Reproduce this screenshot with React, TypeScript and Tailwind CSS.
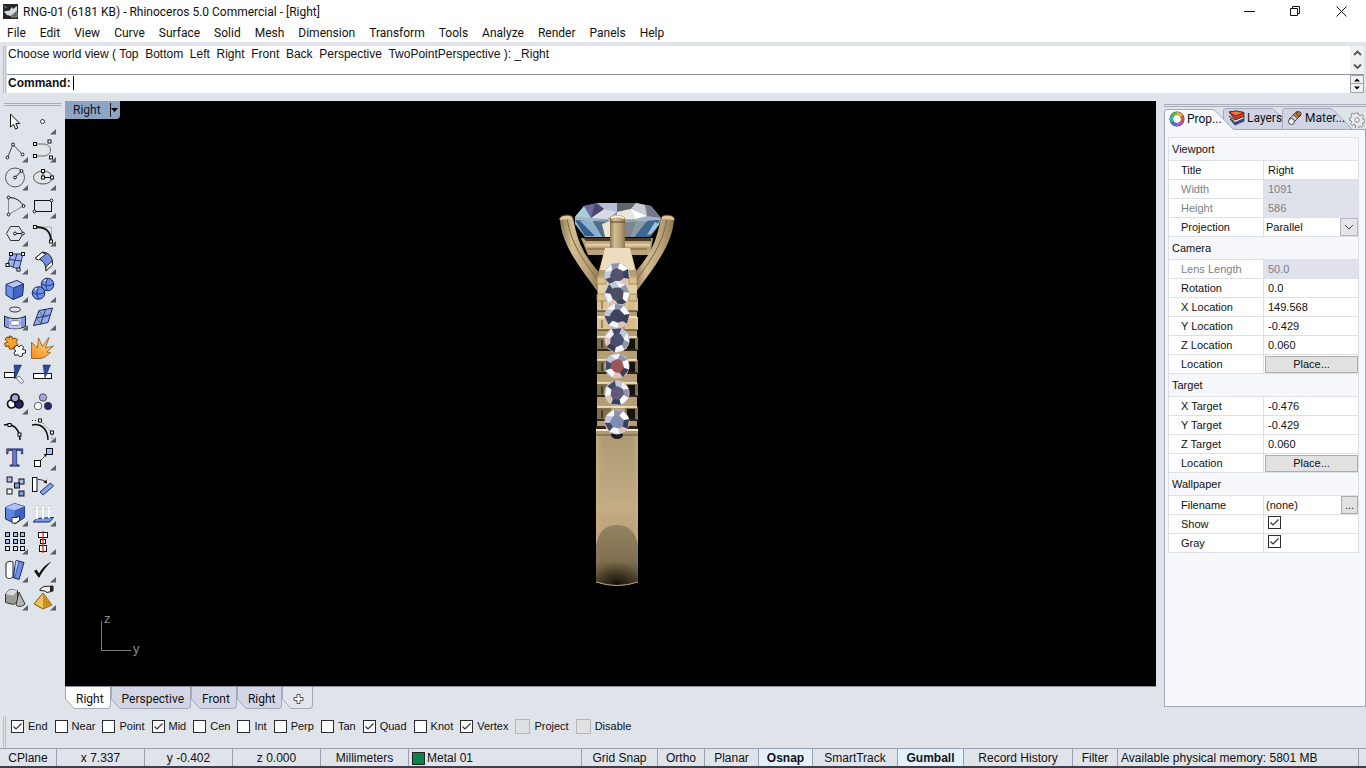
import { useState, type ReactNode } from 'react';
import clsx from 'clsx';

const menus = ['File', 'Edit', 'View', 'Curve', 'Surface', 'Solid', 'Mesh', 'Dimension', 'Transform', 'Tools', 'Analyze', 'Render', 'Panels', 'Help'];

function Check({ id, defaultChecked, disabled }: { id: string; defaultChecked?: boolean; disabled?: boolean }) {
    return (
        <span className="grid shrink-0 place-items-center">
            <input
                id={id}
                type="checkbox"
                defaultChecked={defaultChecked}
                disabled={disabled}
                className={clsx('peer [grid-area:1/1] appearance-none border', disabled ? 'size-[15px] border-[#b4b6ba] bg-[#dfe0e2]' : 'size-[13px] border-[#2c2c30] bg-white')}
            />
            <svg className="pointer-events-none [grid-area:1/1] opacity-0 peer-checked:opacity-100" width="13" height="13" fill="none" stroke="#333" strokeWidth="1.2">
                <path d="M2.5 6.5 5 9l5.5-5.5" />
            </svg>
        </span>
    );
}

/* ---------- tool palette ---------- */

const Sq = ({ x, y, s = 3, fill = '#fff' }: { x: number; y: number; s?: number; fill?: string }) => (
    <rect x={x - s / 2} y={y - s / 2} width={s} height={s} fill={fill} stroke="#111" />
);
const Dot = ({ x, y, r = 1.4 }: { x: number; y: number; r?: number }) => <circle cx={x} cy={y} r={r} fill="#fff" stroke="#111" />;

type Tool = { name: string; more?: boolean; icon: ReactNode };

const tools: Tool[] = [
    { name: 'Select', icon: <path d="M9.5 7v13l3-2.6 2 4.6 2.3-1-2-4.5h4z" fill="#fff" stroke="#111" /> },
    { name: 'Point', more: true, icon: <circle cx="13.5" cy="14.5" r="2" fill="#fff" stroke="#333" /> },
    {
        name: 'Polyline', more: true,
        icon: <><path d="M6.5 22.5 12 9.5l9.5 10" fill="none" stroke="#444" /><Dot x={6.5} y={22.5} /><Dot x={12} y={9.5} /><Dot x={21.5} y={19.5} /></>,
    },
    {
        name: 'Control point curve', more: true,
        icon: <><path d="M6 9h8c10 0 10 12 0 12H6" fill="none" stroke="#666" /><Sq x={6} y={9} /><Sq x={20.5} y={6.5} /><Sq x={6} y={21} /><Sq x={22} y={22.5} /></>,
    },
    {
        name: 'Circle', more: true,
        icon: <><circle cx="14" cy="14.5" r="9.5" fill="none" stroke="#555" /><path d="m14 14.5 6.5-6.5" stroke="#111" /><Dot x={14} y={14.5} /><Dot x={20.5} y={8} /></>,
    },
    {
        name: 'Ellipse', more: true,
        icon: <><ellipse cx="14" cy="14.5" rx="9.5" ry="6.5" fill="none" stroke="#555" /><path d="M14 8v6.5h9" stroke="#111" fill="none" /><Sq x={14} y={8} /><Sq x={14} y={14.5} /><Sq x={23} y={14.5} /></>,
    },
    {
        name: 'Arc', more: true,
        icon: <><path d="M7.5 23.5V6.5M7.5 23.5 22.5 15" stroke="#888" /><path d="M7.5 6.5c7 0 12 3 15 8.5" fill="none" stroke="#111" /><Dot x={7.5} y={6.5} /><Dot x={22.5} y={15} /><Dot x={7.5} y={23.5} /></>,
    },
    { name: 'Rectangle', more: true, icon: <><rect x="5.5" y="9.5" width="17" height="11" fill="none" stroke="#111" /><Dot x={5.5} y={20.5} /><Dot x={22.5} y={9.5} /></> },
    {
        name: 'Polygon', more: true,
        icon: <><path d="m5.5 14.5 4-7h8.5l4 7-4 7H9.500z" fill="none" stroke="#333" /><path d="M14 14.500h8" stroke="#111" /><Dot x={14} y={14.5} /><Dot x={22} y={14.5} /></>,
    },
    {
        name: 'Fillet', more: true,
        icon: <><path d="M6 8h16.500v15" fill="none" stroke="#aaa" /><path d="M6 8c11 0 16 4 16 15" fill="none" stroke="#111" strokeWidth="1.800" /><Sq x={6} y={8} /><Sq x={22} y={22.5} /></>,
    },
    {
        name: 'Surface from points', more: true,
        icon: (
            <>
                <path d="M10 7h12l-4 15.500L6.500 18z" fill="#9db4ea" stroke="#25356b" />
                <path d="m16 7-4 13M8.500 12.500l12 1.500" stroke="#25356b" />
                <Sq x={10} y={7} /><Sq x={22} y={7} /><Sq x={6.5} y={18} /><Sq x={17.5} y={22.5} />
            </>
        ),
    },
    {
        name: 'Sweep', more: true,
        icon: <><path d="M6 11.500 13.500 5c7 1 10.500 5 10 12.500L17 24c0-7-3-12-11-12.500z" fill="#6f8fe0" stroke="#222" /><path d="m6 11.500 7-6 4 1.500-7.500 6zM23.500 14v4L17 24v-4.500z" fill="#fff" stroke="#222" /></>,
    },
    {
        name: 'Box', more: true,
        icon: (
            <>
                <path d="m5 9.500 11-4 6.500 3.500-1 11.500L12 24.500 5 20z" fill="#6d90e6" stroke="#142864" />
                <path d="m5 9.500 11-4 6.500 3.500L12.500 13z" fill="#b3c7f7" stroke="#142864" strokeWidth=".7" />
                <path d="m12.500 13 10-4-1 11.500-9.500 4z" fill="#4468c2" stroke="#142864" strokeWidth=".7" />
            </>
        ),
    },
    {
        name: 'Boolean', more: true,
        icon: (
            <>
                <circle cx="18.500" cy="9.500" r="6.300" fill="#6d90e6" stroke="#142864" />
                <circle cx="9.500" cy="18" r="6.300" fill="#6d90e6" stroke="#142864" />
                <path d="M18.500 3.500c-2 4-2 8 0 12M12.500 9c4 2 8 2 12 0M9.500 12c-2 4-2 8 0 12M3.500 17.500c4 2 8 2 12 0" fill="none" stroke="#142864" strokeWidth=".8" />
                <path d="m15 6 2-1.500M6 14.500 8 13" stroke="#e4ecff" strokeWidth="1.500" />
            </>
        ),
    },
    {
        name: 'Project to surface', more: true,
        icon: (
            <>
                <ellipse cx="14" cy="6.500" rx="5.500" ry="2.500" fill="none" stroke="#333" />
                <path d="M3.500 13c6 3.500 15 3.500 21 0v10.500c-6 3-15 3-21 0z" fill="#7d9be8" stroke="#222" />
                <path d="M8 15.500c4 1 8 1 12 0V25c-4 .8-8 .8-12 0z" fill="#b9caf6" />
                <ellipse cx="14" cy="20" rx="5" ry="2.500" fill="#fff" stroke="#555" strokeWidth=".7" />
            </>
        ),
    },
    {
        name: 'Rebuild mesh', more: true,
        icon: <><path d="M10 7.500 23.500 5 19 19.500 4.500 22.500z" fill="#8fa9e8" stroke="#222c55" /><path d="m16.500 6.500-5 15M7.500 15l13.500-3" stroke="#222c55" strokeWidth=".9" /><path d="M10 7.500 14 14l7-2M7.500 15l5 6" fill="none" stroke="#3c4a80" strokeWidth=".7" /></>,
    },
    {
        name: 'Join',
        icon: (
            <>
                <path d="m8 5 3 .5.500 2.500 3-1 2 2-1.500 2.500 2 2-2 3-2-1-2 3-3-1 0-2.500-3.500.5-1-3 3-1.500-2.500-3 2-2 2.500 1z" fill="#f5a32a" stroke="#7a4306" />
                <path d="m16 14 2 2 2.500-2 2 2-1 2.500 3 .5v3l-3 .5 0 2.500-3 .5-1.500-2-3 1-1-3 2-1.500-2.500-2 1.500-2.500z" fill="#fff" stroke="#222" />
            </>
        ),
    },
    { name: 'Explode', icon: <path d="m2.500 11 6 6L9.500 7l4 8.500L20 6.500l-3.500 10.500 8-2-7 6 4 .5-5.500 4.500-4 1.500h-9.500z" fill="url(#blast)" stroke="#7d4509" strokeWidth=".7" /> },
    {
        name: 'Trim',
        icon: <><rect x="3.500" y="13.500" width="10" height="5" fill="#fff" stroke="#111" /><path d="m15 19 3-2 5 5.500-3 2z" fill="#eee" stroke="#777" /><path d="M13 6h7.500L14 20z" fill="#2d4a96" stroke="#182a5e" strokeWidth=".5" /></>,
    },
    { name: 'Split', icon: <><rect x="4.500" y="14.500" width="18" height="5" fill="#fff" stroke="#111" /><path d="M14 6h7.500L16 19z" fill="#2d4a96" stroke="#182a5e" strokeWidth=".5" /></> },
    {
        name: 'Group', more: true,
        icon: (
            <g stroke="#111" strokeWidth="1.700">
                <circle cx="10.500" cy="17" r="4" fill="#fff" /><circle cx="18" cy="17" r="4" fill="#26236c" /><circle cx="14" cy="11" r="4" fill="#a5a5dc" />
            </g>
        ),
    },
    {
        name: 'Ungroup',
        icon: (
            <g stroke="#333" strokeWidth=".8">
                <circle cx="14" cy="10.500" r="3.700" fill="#a5a5dc" /><circle cx="9" cy="19" r="3.700" fill="#fff" /><circle cx="19" cy="19" r="3.700" fill="#26236c" />
            </g>
        ),
    },
    { name: 'Edit points', icon: <><path d="M3 10c9-2 16 4 16 15" fill="none" stroke="#111" strokeWidth="1.500" /><Sq x={8.5} y={10} /><Sq x={18.5} y={19.5} /></> },
    {
        name: 'Control points', more: true,
        icon: <><path d="M3 10c9-2 16 4 16 15" fill="none" stroke="#111" strokeWidth="1.500" /><path d="M3 5.500h8l12 12V25" fill="none" stroke="#222" strokeDasharray="1 2" /><Sq x={11} y={5.500} /><Sq x={23} y={17.500} /></>,
    },
    {
        name: 'Text',
        icon: <text x="13.500" y="23" textAnchor="middle" fontFamily="Liberation Serif, serif" fontWeight="bold" fontSize="25" fill="#5f82dc" stroke="#1b2c66" strokeWidth=".8">T</text>,
    },
    {
        name: 'Move', more: true,
        icon: <><path d="m12 17 5-5" stroke="#222" strokeDasharray="2 1" /><path d="m18 10.500-3.500 1 2.500 2.500z" fill="#111" /><Sq x={20.5} y={8.5} s={6} fill="#a9bdf0" /><Sq x={8.5} y={20.5} s={6} /></>,
    },
    {
        name: 'Copy',
        icon: <><Sq x={8.5} y={8.5} s={5} fill="#a9bdf0" /><Sq x={20.5} y={10.5} s={5} fill="#a9bdf0" /><Sq x={16} y={14.5} s={5} fill="#7c99e2" /><Sq x={8.5} y={20.5} s={5} /><Sq x={20.5} y={22.5} s={5} fill="#7c99e2" /></>,
    },
    {
        name: 'Rotate',
        icon: <><rect x="3.500" y="6.500" width="4.500" height="14" fill="#fff" stroke="#111" /><path d="m11 21 10.500-9 3 3-10.500 9z" fill="#8ba6ea" stroke="#1b2c66" /><path d="M9 8.500c4 0 6 1 8 3" fill="none" stroke="#222" /><path d="m18 12.500-.5-4-3 3z" fill="#111" /></>,
    },
    {
        name: 'Solid edit', more: true,
        icon: (
            <>
                <path d="m4.500 8.500 9-4 10 3v11l-9 6-10-4.500z" fill="#5f85e0" stroke="#142864" />
                <path d="m4.500 8.500 9-4 10 3-10 4z" fill="#a9c1f8" />
                <path d="m23.500 7.500-10 4v12.500l10-5.500z" fill="#3f63bd" />
                <path d="M11 18.500h5l2.500-1.500v4l-3.500 3H11z" fill="#fff" stroke="#111" strokeWidth=".8" />
            </>
        ),
    },
    {
        name: 'Flow', more: true,
        icon: <><path d="m8 19.500 16.500-1-4 4.500H4z" fill="#7e9bea" stroke="#142864" /><path d="M8 20V8M14 20V8M20 19V8" stroke="#fff" strokeWidth="1.800" /><path d="M5.500 10 8 6l2.500 4zM11.500 10 14 6l2.500 4zM17.500 10 20 6l2.500 4z" fill="#fff" stroke="#999" strokeWidth=".3" /></>,
    },
    {
        name: 'Array', more: true,
        icon: <>{[7, 14, 21].map((y) => [6, 14, 21].map((x) => <Sq key={x + '-' + y} x={x + 0.5} y={y + 0.5} s={4} fill={y < 20 ? '#a9bdf0' : '#dfe6fa'} />))}</>,
    },
    {
        name: 'Align', more: true,
        icon: <><rect x="9.500" y="5.500" width="9" height="5" fill="#fff" stroke="#111" /><rect x="11.500" y="12.500" width="5" height="4" fill="#fff" stroke="#111" /><rect x="10.500" y="18.500" width="7" height="6" fill="#fff" stroke="#111" /><path d="M14 4v22" stroke="#d22" strokeWidth="1.300" /></>,
    },
    {
        name: 'Bend', more: true,
        icon: <><path d="M5 8c2-2 5-2 7-1v15c-2 2-5 2-7 0z" fill="#fff" stroke="#222" /><path d="m15 5.500 8 2-5 17-6-2z" fill="#6d90e6" stroke="#142864" /><path d="m15 5.500 3 .7-4.500 17" fill="#b9cbf8" stroke="#142864" strokeWidth=".6" /></>,
    },
    { name: 'Check', more: true, icon: <path d="M5 16 7.500 14.500l2.500 4C13 13.500 17 9 22.500 6.500 17.500 11 13 17 10 23z" fill="#111" /> },
    {
        name: 'Primitives', more: true,
        icon: <><path d="m4.500 11 4-4.500 8 1v11l-4 3-8-2z" fill="#9c9c9c" stroke="#333" /><path d="m4.500 11 4-4.500 8 1-4 5z" fill="#ddd" /><path d="m18 9 6 12c-2 3-8 3-9 1z" fill="#b5b5b5" stroke="#333" /></>,
    },
    {
        name: 'Render tools', more: true,
        icon: <><path d="M11 6 15 3.500l9-.5v5l-6 1.500-2-1.500-5-.5z" fill="#eee" stroke="#222" /><path d="m21 3 3 0v5l-3 .5z" fill="#222" /><path d="m14 10 9 12-9 4-9-5z" fill="#f0c352" stroke="#7a5410" /><path d="m14 10 9 12-9 4z" fill="#c98f22" /></>,
    },
];

function Toolbar() {
    return (
        <aside className="w-[65px] shrink-0 pt-[3px]">
            <div className="mx-1 h-[3px] border-y border-[#a9adba]" />
            <svg width="0" height="0" className="absolute">
                <linearGradient id="blast" x1="0" y1="1" x2="1" y2="0">
                    <stop offset="0" stopColor="#f58a1c" />
                    <stop offset="1" stopColor="#ffe38a" />
                </linearGradient>
            </svg>
            <div className="ml-px mt-px grid w-14 grid-cols-2">
                {tools.map((tool) => (
                    <button key={tool.name} aria-label={tool.name} className="size-7 hover:bg-white/50">
                        <svg width="28" height="28" viewBox="0 0 28 28">
                            {tool.icon}
                            {tool.more && <path d="M27 22v5.500h-6z" fill="#5e6067" />}
                        </svg>
                    </button>
                ))}
            </div>
        </aside>
    );
}

/* ---------- ring model ---------- */

const stones = [
    { y: 75, turn: 0, core: '#55536f' },
    { y: 94, turn: 70, core: '#4a4f66' },
    { y: 116, turn: 20, core: '#3d4360' },
    { y: 140, turn: 130, core: '#4b4f6e' },
    { y: 166, turn: 45, core: '#9c5558' },
    { y: 193, turn: 100, core: '#5f5b78' },
    { y: 222, turn: 15, core: '#7f8cb4' },
];

function Stone({ y, turn, core }: { y: number; turn: number; core: string }) {
    return (
        <g transform={`translate(61 ${y}) rotate(${turn})`}>
            <circle r="12.500" fill="#c9cbd6" />
            <path d="M-12 -3-6-11-4-4z" fill="#f6f4f4" />
            <path d="M-6-11 3-12 0-5-4-4z" fill="#8f93ab" />
            <path d="M3-12 11-6 5-3 0-5z" fill="#fff" />
            <path d="M11-6 12 4 6 3 5-3z" fill="#3a3f55" />
            <path d="M12 4 5 11 3 5 6 3z" fill="#e3c3b8" />
            <path d="M5 11-5 11-2 5 3 5z" fill="#f5f6fb" />
            <path d="M-5 11-12 4-6 2-2 5z" fill="#454a63" />
            <path d="M-12 4-12-3-4-4-6 2z" fill="#c0c8de" />
            <path d="M-5-5 0-7 6-4 7 3 3 6-3 6-7 1z" fill={core} />
        </g>
    );
}

function Ring() {
    return (
        <svg width="122" height="390" viewBox="0 0 122 390" role="img" aria-label="Ring model" className="absolute left-[491px] top-[99px]">
            <defs>
                <linearGradient id="gold" x1="0" x2="1">
                    <stop offset="0" stopColor="#8b7654" /><stop offset=".3" stopColor="#d3bd91" /><stop offset=".7" stopColor="#b8a177" /><stop offset="1" stopColor="#8d774f" />
                </linearGradient>
                <linearGradient id="shank" x1="0" y1="0" x2="0" y2="1">
                    <stop offset="0" stopColor="#ab9971" /><stop offset=".3" stopColor="#b9a67e" /><stop offset=".5" stopColor="#c5ac85" /><stop offset=".8" stopColor="#ae986f" /><stop offset="1" stopColor="#8c7854" />
                </linearGradient>
                <linearGradient id="edge" x1="0" x2="1">
                    <stop offset="0" stopColor="#cfae88" stopOpacity=".7" /><stop offset=".2" stopColor="#c3a47c" stopOpacity="0" /><stop offset=".85" stopColor="#c3a47c" stopOpacity="0" /><stop offset="1" stopColor="#cfae88" stopOpacity=".7" />
                </linearGradient>
                <linearGradient id="dim" x1="0" y1="0" x2="0" y2="1">
                    <stop offset="0" stopColor="#85785a" stopOpacity=".75" /><stop offset=".6" stopColor="#6b5e42" stopOpacity=".7" /><stop offset="1" stopColor="#2c2415" stopOpacity=".85" />
                </linearGradient>
                <radialGradient id="shade" cx=".5" cy="1" r=".6">
                    <stop offset="0" stopColor="#0c0a06" /><stop offset=".3" stopColor="#1c170d" stopOpacity=".7" /><stop offset="1" stopColor="#3b3120" stopOpacity="0" />
                </radialGradient>
            </defs>

            {/* gallery rail */}
            <path d="M25 38h72l-3 17H32z" fill="#b9a378" />
            <path d="M27 38h68v3H30z" fill="#4d3c24" />
            <path d="M30 45h64" stroke="#dfcaa0" strokeWidth="3" />
            <path d="M31 49h60" stroke="#705c3b" />
            <path d="m35 55 10 14 4-14zM87 55 77 69l-3-14z" fill="#0a0805" />

            {/* centre diamond */}
            <path d="M19 17 28 6 42 3h38l15 3 10 12-2 7-9 12H29L19 24z" fill="#9fb4c8" />
            <path d="m19 17 9-11 7 12z" fill="#a9cdd8" /><path d="m28 6 14-3 6 6-13 9z" fill="#6b6a99" /><path d="m42 3 19 0 0 9-13-3z" fill="#b9bddc" />
            <path d="m48 9 13 3-9 7-17-1z" fill="#d9dbe4" /><path d="m35 18 13-9-9-6z" fill="#4d4770" />
            <path d="M61 3h19l-5 6-14 3z" fill="#62646e" /><path d="m61 12 14-3 4 10-18 0z" fill="#e8e7dd" /><path d="m75 9 5-6 9 2 2 11z" fill="#c9cbd2" />
            <path d="m75 9 16 7-12 3z" fill="#fff" /><path d="m89 5 6 1 10 12-14-2z" fill="#77788a" /><path d="m61 12-9 7h9z" fill="#8d8a8e" />
            <path d="m19 20 13 1 9 15H29z" fill="#345f8b" /><path d="m24 21 10 0 10 15-4 1z" fill="#8bb1cf" /><path d="m36 20 16 0 1 17h-7z" fill="#4b6f8c" /><path d="m46 24 8-3v16h-5z" fill="#ece4cc" />
            <path d="m69 20 12 0-6 17h-6z" fill="#7c8791" /><path d="m81 20 11 2-15 15h-2z" fill="#8c98a4" /><path d="m92 20 12 0-10 17H78z" fill="#3f688f" /><path d="m99 22 4 2-8 10-4 1z" fill="#9bc3df" />
            <path d="M19 19c25 3 60 3 86 0" fill="none" stroke="#a9b9c9" />

            {/* prongs */}
            <path d="M4 20C6 46 24 67 44 95V73C29 57 22 44 17 18L4 17z" fill="url(#gold)" />
            <path d="M11 19c5 28 18 43 33 64" fill="none" stroke="#7d6844" />
            <path d="M118 20C116 46 98 67 78 95V73C93 57 100 44 105 18l13-1z" fill="url(#gold)" />
            <path d="M111 19c-5 28-18 43-33 64" fill="none" stroke="#7d6844" />
            <path d="M3 20q1-5 8-5 6 0 6 4M105 19q0-4 6-4 7 0 8 5" fill="#dfc597" stroke="#453720" />
            <path d="M54 48V19q0-4 7-4 8 0 8 4v29z" fill="url(#gold)" />
            <path d="M55 18q5-3 13 0" stroke="#fff0cf" strokeWidth="2" fill="none" />
            <path d="M54 22h15" stroke="#53432a" />

            {/* shoulder with pave setting */}
            <path d="M49 48h25l6 22 1 30v136H41V100l2-30z" fill="#b49f75" />
            <path d="M49 48h25l5 22H44z" fill="#eedcc0" />
            <path d="M42 76h39v22H42z" fill="#e3cfa8" />
            {[98, 117, 137, 160, 183, 207].map((y, i) => (
                <g key={y}>
                    <path d={`M41 ${y}h14v13H41zM69 ${y}h13v13H69z`} fill={i < 2 ? '#dcc494' : '#81704c'} />
                    <path d={`M41 ${y}h40`} stroke="#fff1d0" strokeWidth="1.500" />
                    <path d={`M41 ${y + 13}h40`} stroke="#30271a" strokeWidth={i < 2 ? 1 : 2} />
                    <path d={`M71 ${y + 2}h8v10h-8z`} fill={i < 2 ? '#d9bd88' : '#17120b'} />
                    <path d={`M46 ${y + 3}v8`} stroke={i < 2 ? '#8d754b' : '#322919'} strokeWidth="1.500" />
                </g>
            ))}
            {[77, 94].map((y) => <path key={y} d={`M41 ${y}h9v7h-9zM73 ${y}h8v7h-8z`} fill="#d9c08e" stroke="#9b8257" strokeWidth=".8" />)}
            <path d="M40 226h42v3H40z" fill="#37251a" /><path d="M40 229h42v2H40z" fill="#f7e9cd" />

            {/* shank */}
            <path d="M40 231h42v151q-20 7-42 0z" fill="url(#shank)" />
            <path d="M40 234h42v148q-20 7-42 0z" fill="url(#edge)" />
            <path d="M40 382v-37q4-20 21-20t21 20v37q-20 7-42 0z" fill="url(#dim)" />
            <path d="M40 382v-37h42v37q-20 7-42 0z" fill="url(#shade)" />
            <path d="M40 382q21 7 42 0" fill="none" stroke="#b7a47b" />
            <path d="M40 235h42" stroke="#65563a" />
            <ellipse cx="61" cy="235" rx="6" ry="4" fill="#1b1c20" />
            {stones.map((stone) => <Stone key={stone.y} {...stone} />)}
        </svg>
    );
}

/* ---------- viewport ---------- */

const viewTabs = ['Right', 'Perspective', 'Front', 'Right'];

function ViewTabs() {
    const [active, setActive] = useState(0);
    return (
        <nav className="flex h-[22px] text-[12px]">
            {[...viewTabs, '+'].map((name, i) => (
                <button key={i} onClick={() => setActive(i)} aria-label={name === '+' ? 'New tab' : undefined} className="flex h-[22px]">
                    <svg width="9" height="22" className={clsx('block', i === active ? 'fill-white' : name === '+' ? 'fill-[#e2e5ec]' : 'fill-[#d3d7e5]')}>
                        <path d="M0 0v12l9 9.500V0z" />
                        <path d="M.5 0v12l8.500 9.500" fill="none" stroke="#a3a9bb" />
                    </svg>
                    <span className={clsx('flex h-[22px] items-center rounded-br-sm border-b border-r border-[#a3a9bb] pt-[2px] pr-[6px]', i === active ? 'bg-white' : name === '+' ? 'bg-[#e2e5ec]' : 'bg-[#d3d7e5]')}>
                        {name === '+' ? (
                            <svg width="15" height="11" viewBox="0 0 15 11" className="fill-white stroke-[#555]">
                                <path d="M6 1.500h3v3h3v3H9v3H6v-3H3v-3h3z" />
                            </svg>
                        ) : (
                            <span className="pl-[2px]">{name}</span>
                        )}
                    </span>
                </button>
            ))}
        </nav>
    );
}

function Viewport() {
    return (
        <main className="flex min-w-0 flex-1 flex-col pt-px">
            <div className="relative min-h-0 flex-1 overflow-hidden border-b border-[#8d8f96] bg-black">
                <button className="absolute left-0 top-0 flex h-[18px] w-[55px] items-center rounded-br bg-[#8da4c3] pl-2 text-[12px] text-[#101828]">
                    Right
                    <svg width="12" height="16" className="ml-auto"><path d="M2.500 1v14" stroke="#222" /><path d="M3 6h7L6.500 10z" fill="#000" /></svg>
                </button>
                <Ring />
                <svg width="60" height="60" className="absolute bottom-[20px] left-[30px]" fontFamily="Liberation Sans, sans-serif" fontSize="13" fill="#8b8b8b">
                    <path d="M6.500 15v29.500H36" fill="none" stroke="#7c7c7c" />
                    <text x="9" y="17">z</text>
                    <text x="38" y="47">y</text>
                </svg>
            </div>
            <ViewTabs />
        </main>
    );
}

/* ---------- properties panel ---------- */

type Field = { label: string; value?: string; kind?: 'readonly' | 'select' | 'button' | 'browse' | 'check' };

const groups: { title: string; fields: Field[] }[] = [
    {
        title: 'Viewport',
        fields: [
            { label: 'Title', value: 'Right' },
            { label: 'Width', value: '1091', kind: 'readonly' },
            { label: 'Height', value: '586', kind: 'readonly' },
            { label: 'Projection', value: 'Parallel', kind: 'select' },
        ],
    },
    {
        title: 'Camera',
        fields: [
            { label: 'Lens Length', value: '50.0', kind: 'readonly' },
            { label: 'Rotation', value: '0.0' },
            { label: 'X Location', value: '149.568' },
            { label: 'Y Location', value: '-0.429' },
            { label: 'Z Location', value: '0.060' },
            { label: 'Location', value: 'Place...', kind: 'button' },
        ],
    },
    {
        title: 'Target',
        fields: [
            { label: 'X Target', value: '-0.476' },
            { label: 'Y Target', value: '-0.429' },
            { label: 'Z Target', value: '0.060' },
            { label: 'Location', value: 'Place...', kind: 'button' },
        ],
    },
    {
        title: 'Wallpaper',
        fields: [
            { label: 'Filename', value: '(none)', kind: 'browse' },
            { label: 'Show', kind: 'check' },
            { label: 'Gray', kind: 'check' },
        ],
    },
];

function FieldControl({ field, id }: { field: Field; id: string }) {
    switch (field.kind) {
        case 'select':
            return (
                <div className="relative flex h-[18px]">
                    <select id={id} className="w-full appearance-none bg-white pl-[2px]"><option>Parallel</option><option>Perspective</option></select>
                    <svg width="18" height="18" className="pointer-events-none absolute right-0 top-0 border border-[#b5b8c0] bg-[#e4e5e8]" fill="none" stroke="#444">
                        <path d="m4 6 4 4 4-4" />
                    </svg>
                </div>
            );
        case 'button':
            return <button id={id} className="ml-px block h-[17px] w-[93px] border border-[#adadad] bg-[#e1e1e1] leading-[15px]">{field.value}</button>;
        case 'browse':
            return (
                <div className="flex h-[18px]">
                    <input id={id} defaultValue={field.value} className="min-w-0 flex-1 bg-white pl-[2px]" />
                    <button aria-label="Browse" className="w-[17px] border border-[#adadad] bg-[#e1e1e1] leading-[14px]">...</button>
                </div>
            );
        case 'check':
            return <div className="flex h-[17px] items-start pl-1"><Check id={id} defaultChecked /></div>;
        default:
            return (
                <input
                    id={id}
                    defaultValue={field.value}
                    disabled={field.kind === 'readonly'}
                    className={clsx('block h-[18px] w-full pl-1', field.kind === 'readonly' ? 'bg-[#dfe2ea] text-[#7d7f86]' : 'bg-white')}
                />
            );
    }
}

function Group({ title, fields }: { title: string; fields: Field[] }) {
    return (
        <tbody>
            <tr className="h-[23px] border-b border-[#dcdfe6]">
                <th colSpan={2} className="pl-[3px] text-left font-normal">{title}</th>
            </tr>
            {fields.map((field) => {
                const id = `${title}-${field.label}`;
                return (
                    <tr key={id} className="h-[19px] border-b border-[#dcdfe6] bg-white">
                        <td className={clsx('border-r border-[#dcdfe6] p-0 pl-3', field.kind === 'readonly' && 'text-[#7d7f86]')}>
                            <label htmlFor={id}>{field.label}</label>
                        </td>
                        <td className="p-0"><FieldControl field={field} id={id} /></td>
                    </tr>
                );
            })}
        </tbody>
    );
}

const WheelIcon = () => (
    <svg width="16" height="16" viewBox="0 0 16 16" fill="none" strokeWidth="3">
        <circle cx="8" cy="8" r="5.500" stroke="#333" strokeWidth="4" />
        <path d="M8 2.500a5.500 5.500 0 0 1 4.800 2.800" stroke="#f3b13a" /><path d="M12.800 5.300a5.500 5.500 0 0 1 0 5.400" stroke="#e9503e" />
        <path d="M12.800 10.700A5.500 5.500 0 0 1 8 13.500" stroke="#b455c8" /><path d="M8 13.500a5.500 5.500 0 0 1-4.800-2.800" stroke="#4f6fe0" />
        <path d="M3.200 10.700a5.500 5.500 0 0 1 0-5.400" stroke="#36b8c0" /><path d="M3.200 5.300A5.500 5.500 0 0 1 8 2.500" stroke="#5fbe4e" />
        <circle cx="8" cy="8" r="3.800" fill="#fff" />
    </svg>
);

const LayersIcon = () => (
    <svg width="17" height="16" viewBox="0 0 17 16" stroke="#222" strokeWidth=".7">
        <path d="m2 9 5 6 9-4V8l-9 4z" fill="#2f4fae" />
        <path d="m1 6 6 6.500 9-4V6L7 10z" fill="#f4f4f4" />
        <path d="M1 2 7 10l9-3.500V2.500L8 1z" fill="#d93a1c" />
        <path d="m1 2 7-1 8 1.500L7.500 6z" fill="#f4734b" />
    </svg>
);

const MaterialIcon = () => (
    <svg width="16" height="16" viewBox="0 0 16 16" stroke="#222" strokeWidth=".8">
        <path d="m2 9 8-7.500 4 3.500-8 8z" fill="#d6d6dc" /><path d="m6.500 5 3.500-3.500 4 3.500-3.500 3.500z" fill="#e08a2d" /><circle cx="11.800" cy="3.800" r="2.200" fill="#c77a30" /><circle cx="4.500" cy="11.500" r="3" fill="#f4f4f4" />
    </svg>
);

const panelTabs = [
    { name: 'Prop...', icon: <WheelIcon /> },
    { name: 'Layers', icon: <LayersIcon /> },
    { name: 'Mater...', icon: <MaterialIcon /> },
];

function Panel() {
    return (
        <aside className="flex w-[202px] shrink-0 flex-col pt-1">
            <div className="h-[3px] shrink-0 border-y border-[#a9adba]" />
            <div className="relative mt-px flex h-[22px] shrink-0 items-end border-b border-[#a3a9bb]">
                {panelTabs.map((tab, i) => (
                    <button key={tab.name} className={clsx('relative flex h-[21px] w-[71px] items-center gap-[2px] pb-[2px] pl-[5px] text-[12px]', i === 0 ? 'z-20 -mb-px' : '-ml-3', i === 2 && 'z-10')}>
                        <svg width="71" height="21" className={clsx('absolute left-0 top-0', i === 0 ? 'fill-[#f7f8fc]' : 'fill-[#cfd5e4]')}>
                            <path d="M.5 21V3Q.5.5 3 .5h45q2 0 3.500 1.500L70 21" stroke="#a3a9bb" />
                        </svg>
                        <span className="relative shrink-0">{tab.icon}</span>
                        <span className="relative leading-[18px]">{tab.name}</span>
                    </button>
                ))}
                <button aria-label="Panel options" className="absolute right-[1px] top-[4px] z-30">
                    <svg width="16" height="16" viewBox="0 0 16 16" fill="#e7e9ee" stroke="#888">
                        <path d="m6.700 1 2.600 0 .4 2 1.600.7 1.700-1.200 1.500 1.700-1 1.700.6 1.500 1.900.6v2l-1.900.5-.7 1.600 1 1.600-1.600 1.600-1.700-1.100-1.500.7-.4 1.800H6.700L6.300 13l-1.500-.7-1.700 1.100-1.600-1.600 1.100-1.600L2 8.700.500 8.200v-2L2 5.700l.7-1.600-1-1.600L3.200 1l1.600 1 1.500-.6z" />
                        <circle cx="8" cy="8" r="2.200" fill="#f7f8fc" />
                    </svg>
                </button>
            </div>
            <div className="flex-1 border border-t-0 border-[#a3a9bb] bg-[#f6f7fb] pl-[3px] pr-[6px] pt-[7px] font-['Liberation_Sans',sans-serif] text-[11px]">
                <table className="w-full table-fixed border-collapse border border-[#dcdfe6] leading-[16px]">
                    {groups.map((g) => <Group key={g.title} {...g} />)}
                </table>
            </div>
        </aside>
    );
}

/* ---------- bottom bars ---------- */

const snaps = ['End', 'Near', 'Point', 'Mid', 'Cen', 'Int', 'Perp', 'Tan', 'Quad', 'Knot', 'Vertex', 'Project', 'Disable'];
const snapsOn = ['End', 'Mid', 'Quad', 'Vertex'];

function OsnapBar() {
    return (
        <div className="flex h-8 shrink-0 pl-[3px] font-['Liberation_Sans',sans-serif] text-[11px]">
            <div className="w-[3px] border-x border-[#b9bdc9]" />
            <div className="flex h-5 items-center gap-[7px] pl-[5px]">
                {snaps.map((name) => (
                    <label key={name} htmlFor={`snap-${name}`} className="flex items-center gap-1">
                        <Check id={`snap-${name}`} defaultChecked={snapsOn.includes(name)} disabled={name === 'Project' || name === 'Disable'} />
                        {name}
                    </label>
                ))}
            </div>
        </div>
    );
}

const panes = [
    { text: 'CPlane', width: 'w-[57px]' },
    { text: 'x 7.337', width: 'w-[88px]' },
    { text: 'y -0.402', width: 'w-[88px]' },
    { text: 'z 0.000', width: 'w-[88px]' },
    { text: 'Millimeters', width: 'w-[88px]' },
    { text: 'Metal 01', width: 'w-[173px]', swatch: true },
    { text: 'Grid Snap', width: 'w-[76px]' },
    { text: 'Ortho', width: 'w-[47px]' },
    { text: 'Planar', width: 'w-[54px]' },
    { text: 'Osnap', width: 'w-[54px]', on: true },
    { text: 'SmartTrack', width: 'w-[85px]' },
    { text: 'Gumball', width: 'w-[66px]', on: true },
    { text: 'Record History', width: 'w-[109px]' },
    { text: 'Filter', width: 'w-[45px]' },
];

function StatusBar() {
    return (
        <footer className="flex h-[20px] shrink-0 border-b-2 border-t border-b-[#3b3f4a] border-t-[#9aa0b2] font-['Liberation_Sans',sans-serif] text-[12px] leading-[15px]">
            {panes.map((pane) => (
                <button
                    key={pane.text}
                    className={clsx('flex shrink-0 items-center border-r border-[#9aa0b2] pt-[2px] whitespace-nowrap', pane.width, pane.swatch ? 'gap-[2px] pl-[3px]' : 'justify-center', pane.on && 'bg-[#e3f1fc] font-bold')}
                >
                    {pane.swatch && <span className="size-[13px] border border-[#222] bg-[#0d8050]" />}
                    {pane.text}
                </button>
            ))}
            <span className="mr-[7px] flex-1 border-r border-[#9aa0b2] pt-[2px] pl-[3px] whitespace-nowrap">Available physical memory: 5801 MB</span>
        </footer>
    );
}

/* ---------- top ---------- */

function TitleBar() {
    return (
        <header className="flex h-[22px] shrink-0 items-center bg-white pl-[3px] text-[12px]">
            <svg width="15" height="15" viewBox="0 0 15 15">
                <path d="M0 0h15v15H0z" fill="#23272a" />
                <path d="M1 7c2 1 3-1 5 0l3-4 1 2 4-3v5l-4 3-2 2-4-1-2-2z" fill="#d5dadd" />
                <path d="M1 2 4 4M10 11l4-3v5H8z" stroke="#8b9297" fill="#5b6165" />
            </svg>
            <h1 className="ml-[5px] pt-px">RNG-01 (6181 KB) - Rhinoceros 5.0 Commercial - [Right]</h1>
            <div className="ml-auto flex pr-[2px]">
                <button aria-label="Minimize" className="grid h-5 w-[46px] place-items-center"><svg width="11" height="11" stroke="#111"><path d="M0 5.500h11" /></svg></button>
                <button aria-label="Restore" className="grid h-5 w-[46px] place-items-center">
                    <svg width="11" height="11" fill="none" stroke="#111"><path d="M.5 2.500h7v7h-7zM2.500 2.500v-2h7v7h-2" /></svg>
                </button>
                <button aria-label="Close" className="grid h-5 w-[46px] place-items-center"><svg width="11" height="11" stroke="#111"><path d="m.5.5 10 10M10.500.5l-10 10" /></svg></button>
            </div>
        </header>
    );
}

function CommandArea() {
    const [command, setCommand] = useState('');
    return (
        <section className="flex shrink-0 border-t-4 border-[#e1e3ea] pl-[3px] pr-[2px] font-['Liberation_Sans',sans-serif] text-[12px]">
            <div className="w-[3px] border-x border-[#b9bdc9]" />
            <div className="ml-px min-w-0 flex-1 bg-white">
                <div className="flex h-[29px] border-b border-[#8f939c]">
                    <p className="flex-1 pl-px leading-[16px] whitespace-pre">{'Choose world view ( Top  Bottom  Left  Right  Front  Back  Perspective  TwoPointPerspective ): _Right'}</p>
                    <svg width="14" height="28" className="bg-[#f0f0f0]" fill="none" stroke="#555" strokeWidth="1.800"><path d="m4 9 3.500-3.500L11 9M4 18.500 7.500 22l3.500-3.500" /></svg>
                </div>
                <div className="flex h-[18px] leading-[16px]">
                    <label htmlFor="command" className="pl-px font-bold">Command:</label>
                    <span className="mt-px ml-[2px] h-[14px] w-px bg-black" />
                    <input id="command" value={command} onChange={(e) => setCommand(e.target.value)} className="min-w-0 flex-1 outline-none" />
                    <svg width="14" height="18"><path d="M.5.500h13v8H.5zM.5 8.500h13v9H.5z" fill="#f2f2f2" stroke="#a0a0a0" /><path d="M4 6.500h6l-3-3zM4 11.500h6l-3 3z" fill="#000" /></svg>
                </div>
            </div>
        </section>
    );
}

export default function App() {
    return (
        <div className="flex h-screen flex-col overflow-hidden bg-[#dfe3ea] font-['Roboto','Open_Sans',sans-serif] text-[#111]">
            <TitleBar />
            <nav className="flex h-5 shrink-0 items-center gap-[14px] bg-white pt-[2px] pl-[7px] text-[12px]">
                {menus.map((name) => <button key={name}>{name}</button>)}
            </nav>
            <CommandArea />
            <div className="flex min-h-0 flex-1 pt-[7px]">
                <div className="flex min-w-0 flex-1">
                    <Toolbar />
                    <Viewport />
                </div>
                <div className="ml-2 flex pb-[2px]"><Panel /></div>
            </div>
            <div className="h-[7px] shrink-0" />
            <OsnapBar />
            <StatusBar />
        </div>
    );
}
